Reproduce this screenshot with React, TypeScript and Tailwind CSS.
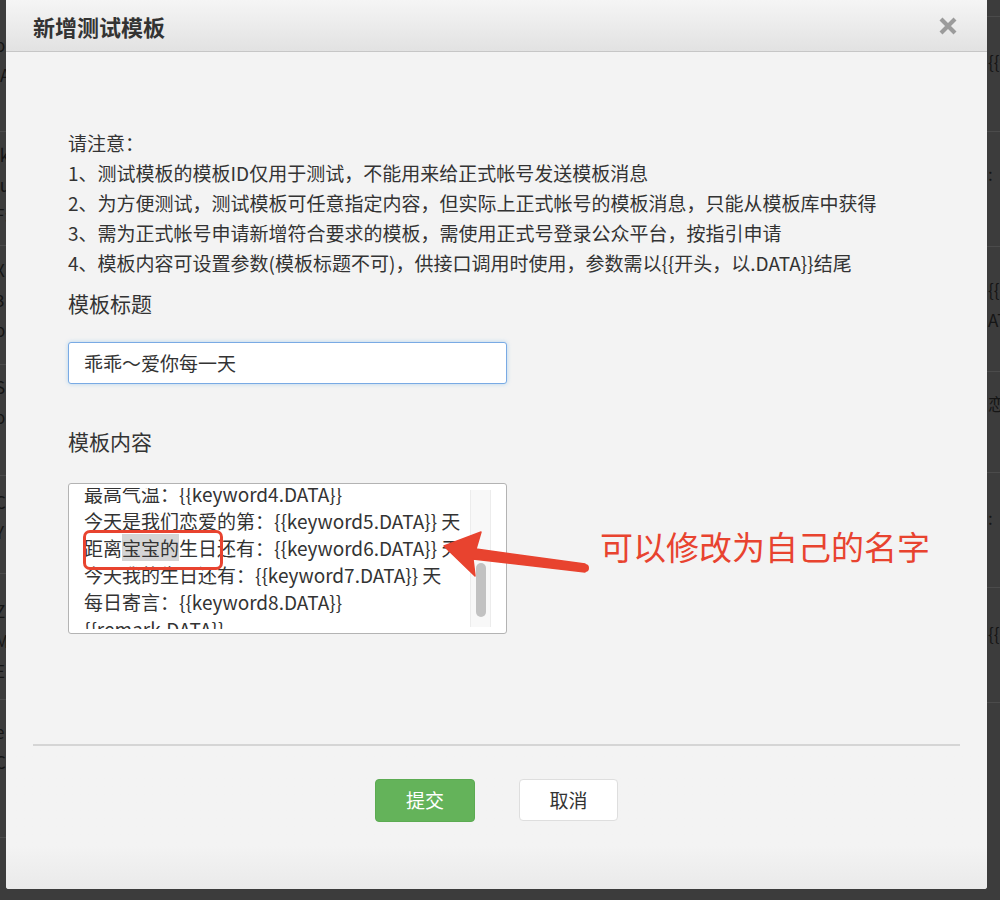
import React from 'react'

const FONT = { fontFamily: '"Noto Sans CJK SC", "Noto Sans", sans-serif' }

const notes = [
  '请注意：',
  '1、测试模板的模板ID仅用于测试，不能用来给正式帐号发送模板消息',
  '2、为方便测试，测试模板可任意指定内容，但实际上正式帐号的模板消息，只能从模板库中获得',
  '3、需为正式帐号申请新增符合要求的模板，需使用正式号登录公众平台，按指引申请',
  '4、模板内容可设置参数(模板标题不可)，供接口调用时使用，参数需以{{开头，以.DATA}}结尾',
]

// background table peeking out at the edges of the modal
const leftRows: { h: string; pt: string; lines: string[] }[] = [
  { h: 'h-[132px]', pt: 'pt-[30px]', lines: ['o(', 'IA'] },
  { h: 'h-[114px]', pt: 'pt-[8px]', lines: ['ik', 'lu', 'F:'] },
  { h: 'h-[119px]', pt: 'pt-[9px]', lines: ['X', '3', 'o'] },
  { h: 'h-[111px]', pt: 'pt-[7px]', lines: ['S', 'o'] },
  { h: 'h-[98px]', pt: 'pt-[11px]', lines: ['C', 'Y'] },
  { h: 'h-[126px]', pt: 'pt-[22px]', lines: ['Z', 'M', 'E'] },
  { h: 'h-[138px]', pt: 'pt-[17px]', lines: ['e', 'C'] },
]

const rightRows: { h: string; pt: string; lines: string[] }[] = [
  { h: 'h-[17px]', pt: 'pt-0', lines: [] },
  { h: 'h-[115px]', pt: 'pt-[30px]', lines: ['{{first.DATA}}'] },
  { h: 'h-[115px]', pt: 'pt-[27px]', lines: [':'] },
  { h: 'h-[125px]', pt: 'pt-[28px]', lines: ['{{keyword', 'ATA}}'] },
  { h: 'h-[101px]', pt: 'pt-[17px]', lines: ['恋爱'] },
  { h: 'h-[115px]', pt: 'pt-[30px]', lines: [':'] },
  { h: 'h-[115px]', pt: 'pt-[31px]', lines: ['{{keyword'] },
]

const contentLines = [
  '{{first.DATA}}',
  '日期：{{keyword1.DATA}}',
  '城市：{{keyword2.DATA}}',
  '最低气温：{{keyword3.DATA}}',
  '最高气温：{{keyword4.DATA}}',
  '今天是我们恋爱的第：{{keyword5.DATA}} 天',
  null,
  '今天我的生日还有：{{keyword7.DATA}} 天',
  '每日寄言：{{keyword8.DATA}}',
  '{{remark.DATA}}',
]

function CloseIcon() {
  return (
    <svg width="20" height="20" viewBox="0 0 20 20">
      <path d="M3 3 L17 17 M17 3 L3 17" stroke="#9b9b9b" strokeWidth="4.2" />
    </svg>
  )
}

function Arrow() {
  return (
    <svg className="absolute left-[363px] top-[37px]" width="170" height="65" viewBox="0 0 170 65">
      <polygon
        points="13,26 50,12 45,29 154,44 154,52 42,39 44,56"
        fill="#e8432f"
        stroke="#e8432f"
        strokeWidth="1.5"
        strokeLinejoin="round"
      />
      <circle cx="154" cy="48" r="4" fill="#e8432f" />
    </svg>
  )
}

export default function App() {
  return (
    <div className="relative w-[1000px] h-[900px] overflow-hidden bg-[#3c3c3c] flex justify-between" style={FONT}>
      {/* left strip of the page behind */}
      <div className="w-[6px] overflow-hidden text-[17px] leading-[30px] text-[#151515]">
        {leftRows.map((r, i) => (
          <div key={i} className={`${r.h} ${r.pt} border-b border-[#4b4b4b] whitespace-nowrap -ml-[5px]`}>
            {r.lines.map((l, j) => (
              <div key={j}>{l}</div>
            ))}
          </div>
        ))}
      </div>

      {/* right strip of the page behind */}
      <div className="w-[13px] overflow-hidden text-[17px] leading-[30px] text-[#151515]">
        {rightRows.map((r, i) => (
          <div key={i} className={`${r.h} ${r.pt} border-b border-[#4b4b4b] whitespace-nowrap pl-[1px]`}>
            {r.lines.map((l, j) => (
              <div key={j}>{l}</div>
            ))}
          </div>
        ))}
      </div>

      {/* modal */}
      <div className="absolute left-[6px] top-0 w-[981px] h-[889px] bg-[#f3f3f3] rounded-b-[3px] flex flex-col overflow-hidden">
        <div className="h-[52px] shrink-0 flex items-center justify-between pl-[27px] pr-[29px] bg-gradient-to-b from-[#f5f5f5] to-[#e2e2e2] border-b border-[#c6c6c6]">
          <h2 className="text-[22px] font-bold text-[#333] leading-none">新增测试模板</h2>
          <CloseIcon />
        </div>

        <div className="pl-[62px] pt-[76px]">
          <div className="text-[19px] leading-[30px] text-[#333]">
            {notes.map((n, i) => (
              <p key={i}>{n}</p>
            ))}
          </div>

          <div className="mt-[10px] text-[21px] leading-[30px] text-[#333]">模板标题</div>
          <div className="mt-[24px] w-[439px] h-[42px] flex items-center px-[15px] bg-white border border-[#79aae4] rounded-[3px] shadow-[0_0_4px_rgba(102,175,233,0.45)] text-[19px] text-[#333]">
            乖乖～爱你每一天
          </div>

          <div className="mt-[42px] text-[21px] leading-[30px] text-[#333]">模板内容</div>

          <div className="relative mt-[27px] flex items-start">
            <div className="relative w-[439px] h-[151px] flex bg-white border border-[#b3b3b3] rounded-[3px] overflow-hidden">
              <div className="w-[401px] pl-[15px] my-[4px] overflow-hidden">
                <div className="-mt-[116px] text-[19px] leading-[27px] text-[#333] whitespace-nowrap">
                  {contentLines.map((l, i) =>
                    l === null ? (
                      <div key={i}>
                        距离<span className="bg-[#d5d5d5]">宝宝的</span>生日还有：{'{{keyword6.DATA}}'} 天
                      </div>
                    ) : (
                      <div key={i}>{l}</div>
                    ),
                  )}
                </div>
              </div>
              <div className="w-[21px] my-[6px] bg-[#f8f8f8] border-x border-[#ececec] flex flex-col items-center pt-[73px]">
                <div className="w-[10px] h-[54px] rounded-full bg-[#c2c2c2]" />
              </div>
              <div className="absolute left-[14px] top-[46px] w-[140px] h-[40px] border-[3px] border-[#e8432f] rounded-[7px]" />
            </div>

            <div className="ml-[93px] mt-[43px] text-[33px] leading-[40px] text-[#e8432f] whitespace-nowrap">
              可以修改为自己的名字
            </div>

            <Arrow />
          </div>
        </div>

        <div className="mt-[110px] mx-[27px] h-[2px] bg-[#d5d5d5]" />

        <div className="flex-1 bg-gradient-to-b from-[#f3f3f3] from-70% to-[#eaeaea]">
          <div className="mt-[33px] flex justify-center gap-[44px]">
            <button className="w-[100px] h-[43px] rounded-[4px] bg-[#64b35a] border border-[#5cab52] text-white text-[19px]">
              提交
            </button>
            <button className="w-[99px] h-[42px] rounded-[4px] bg-white border border-[#dedede] text-[#333] text-[19px]">
              取消
            </button>
          </div>
        </div>
      </div>
    </div>
  )
}
